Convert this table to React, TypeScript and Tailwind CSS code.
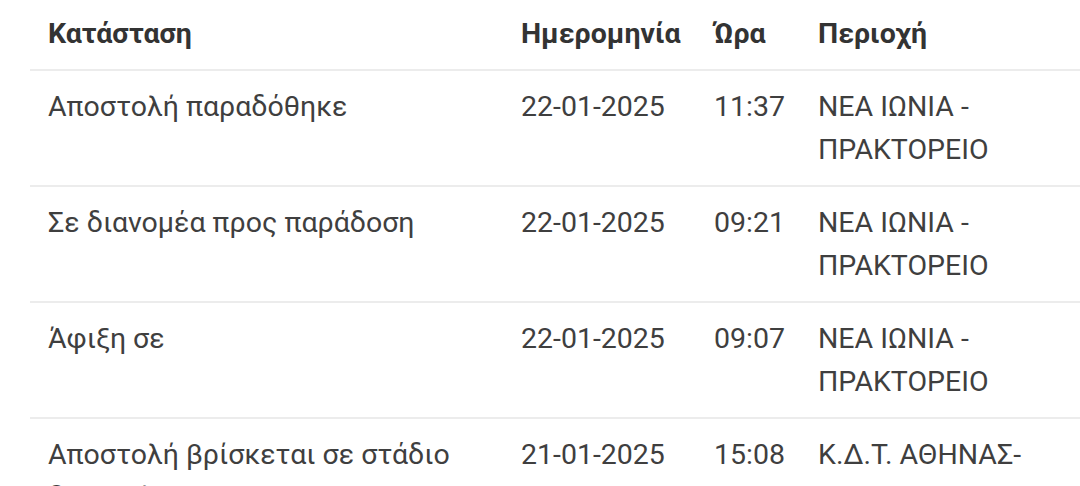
import React from "react";

const rows = [
  { status: "Αποστολή παραδόθηκε", date: "22-01-2025", time: "11:37", area: "ΝΕΑ ΙΩΝΙΑ - ΠΡΑΚΤΟΡΕΙΟ" },
  { status: "Σε διανομέα προς παράδοση", date: "22-01-2025", time: "09:21", area: "ΝΕΑ ΙΩΝΙΑ - ΠΡΑΚΤΟΡΕΙΟ" },
  { status: "Άφιξη σε", date: "22-01-2025", time: "09:07", area: "ΝΕΑ ΙΩΝΙΑ - ΠΡΑΚΤΟΡΕΙΟ" },
  { status: "Αποστολή βρίσκεται σε στάδιο διαλογής", date: "21-01-2025", time: "15:08", area: "Κ.Δ.Τ. ΑΘΗΝΑΣ-ΔΙΑΛΟΓΗ" },
];

export default function App() {
  return (
    <div className="w-[1080px] h-[486px] overflow-hidden bg-white pl-[30px] font-['Roboto','Noto_Sans',sans-serif] text-[28.5px] leading-[43px] text-[#3f3f3f]">
      <table className="table-fixed border-collapse w-[1090px] text-left">
        <colgroup>
          <col className="w-[473px]" />
          <col className="w-[193px]" />
          <col className="w-[104px]" />
          <col className="w-[320px]" />
        </colgroup>
        <thead>
          <tr className="border-b-2 border-[#ececec]">
            <th className="pl-[18px] pt-[12px] pb-[14px] font-bold text-[#333]">Κατάσταση</th>
            <th className="pl-[18px] pt-[12px] pb-[14px] font-bold text-[#333]">Ημερομηνία</th>
            <th className="pl-[18px] pt-[12px] pb-[14px] font-bold text-[#333]">Ώρα</th>
            <th className="pl-[18px] pt-[12px] pb-[14px] font-bold text-[#333]">Περιοχή</th>
          </tr>
        </thead>
        <tbody>
          {rows.map((r, i) => (
            <tr key={i} className="border-b-2 border-[#ececec] align-top">
              <td className="pl-[18px] pt-[14px] pb-[14px]">{r.status}</td>
              <td className="pl-[18px] pt-[14px] pb-[14px]">{r.date}</td>
              <td className="pl-[18px] pt-[14px] pb-[14px]">{r.time}</td>
              <td className="pl-[18px] pr-[60px] pt-[14px] pb-[14px]">{r.area}</td>
            </tr>
          ))}
        </tbody>
      </table>
    </div>
  );
}
